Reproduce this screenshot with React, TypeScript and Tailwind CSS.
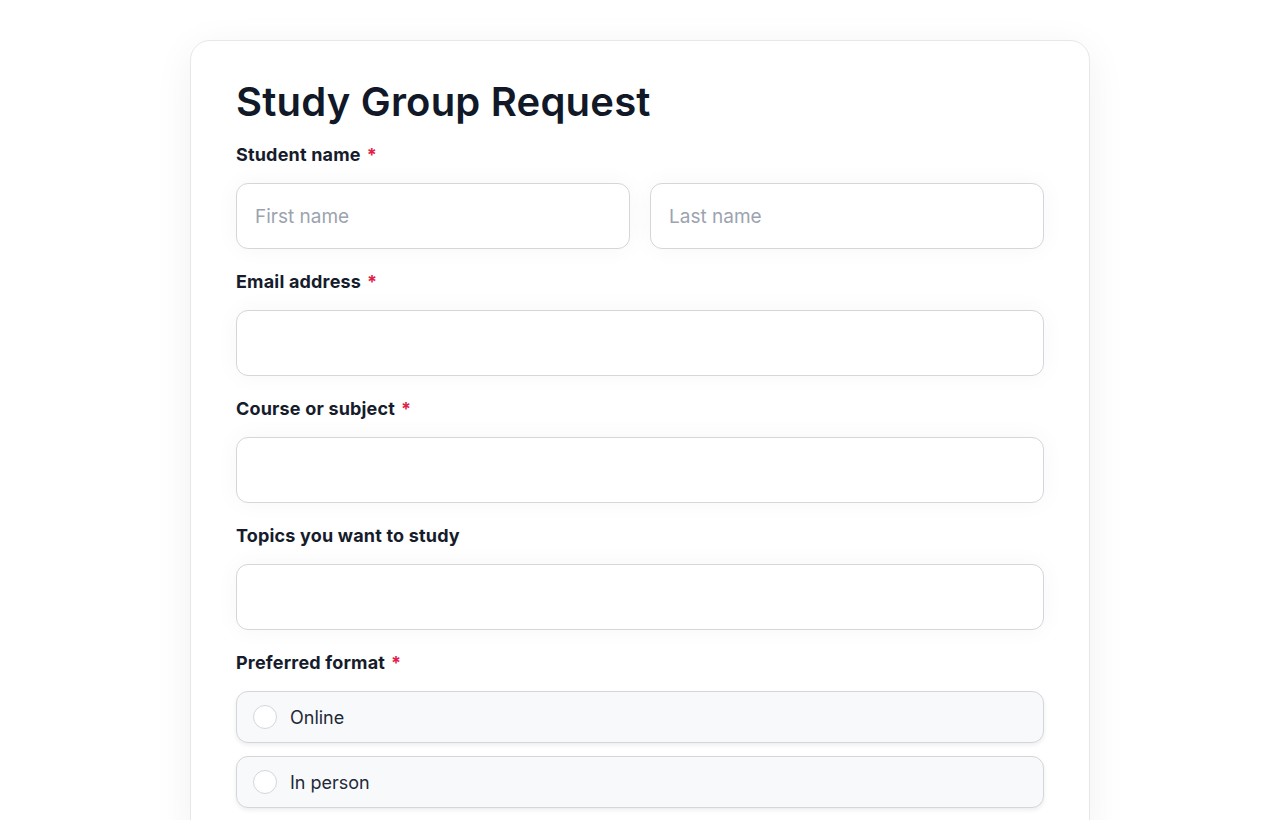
import React, { useState } from 'react';

const font = { fontFamily: 'Inter, "Noto Sans", sans-serif' };

const Label: React.FC<{ text: string; required?: boolean }> = ({ text, required }) => (
  <label className="block text-[18px] leading-6 font-bold tracking-[0.01em] text-[#161c2b] mb-4">
    {text}
    {required && <span className="text-[#e11d48] ml-[6px]">*</span>}
  </label>
);

const inputCls =
  'w-full h-[66px] rounded-[12px] border border-[#d4d6dc] bg-white px-[18px] text-[19px] text-[#111827] placeholder:text-[#9ca3af] outline-none shadow-[0_0_24px_rgba(17,24,39,0.04)]';

export default function App() {
  const [format, setFormat] = useState('');

  return (
    <div className="min-h-screen bg-white pt-10" style={font}>
      <div className="mx-auto w-[900px] rounded-[20px] border border-[#e5e7eb] bg-white px-[45px] pt-[37px] pb-10 shadow-[0_8px_40px_rgba(17,24,39,0.06)]">
        <h1 className="text-[40px] leading-[48px] font-semibold tracking-[0.005em] text-[#111827] mb-[17px]">Study Group Request</h1>

        <div className="mb-[21px]">
          <Label text="Student name" required />
          <div className="grid grid-cols-2 gap-5">
            <input className={inputCls} placeholder="First name" />
            <input className={inputCls} placeholder="Last name" />
          </div>
        </div>

        <div className="mb-[21px]">
          <Label text="Email address" required />
          <input className={inputCls} type="email" />
        </div>

        <div className="mb-[21px]">
          <Label text="Course or subject" required />
          <input className={inputCls} />
        </div>

        <div className="mb-[21px]">
          <Label text="Topics you want to study" />
          <input className={inputCls} />
        </div>

        <div>
          <Label text="Preferred format" required />
          <div className="flex flex-col gap-[13px]">
            {['Online', 'In person'].map((opt) => (
              <label
                key={opt}
                onClick={() => setFormat(opt)}
                className="flex h-[52px] items-center gap-[13px] rounded-[12px] border border-[#d4d6dc] bg-[#f8f9fb] px-4 shadow-[0_2px_4px_rgba(17,24,39,0.08)] cursor-pointer"
              >
                <span className="flex h-6 w-6 items-center justify-center rounded-full border border-[#d4d6dc] bg-white">
                  {format === opt && <span className="h-3 w-3 rounded-full bg-[#111827]" />}
                </span>
                <span className="text-[18px] text-[#1f2937]">{opt}</span>
              </label>
            ))}
          </div>
        </div>
      </div>
    </div>
  );
}
